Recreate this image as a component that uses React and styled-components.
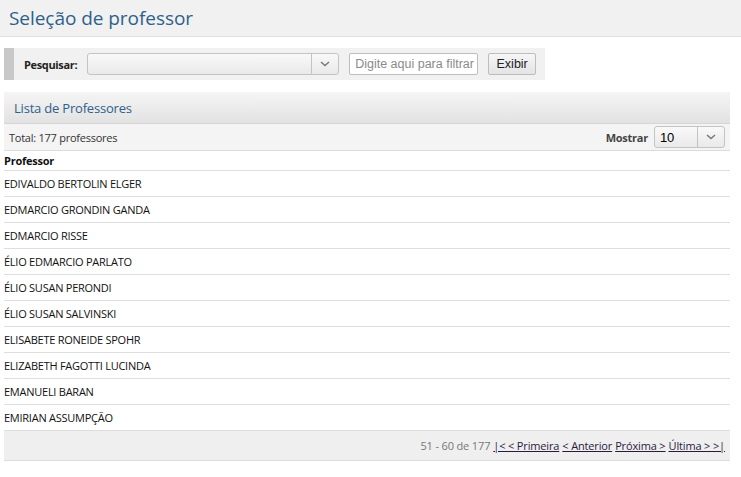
import React from "react";
import styled, { createGlobalStyle } from "styled-components";

const Global = createGlobalStyle`
  html, body { margin: 0; padding: 0; background: #fff; }
  body { font-family: "Open Sans", "Noto Sans", sans-serif; color: #000; }
`;

const Page = styled.div`
  width: 741px;
  min-height: 477px;
  display: flex;
  flex-direction: column;
`;

const TitleBar = styled.div`
  height: 36px;
  background: #f1f1f1;
  border-bottom: 1px solid #e0e0e0;
  display: flex;
  align-items: center;
  padding-left: 9px;
`;

const Title = styled.h1`
  margin: 0;
  font-family: "Open Sans", sans-serif;
  font-weight: 400;
  font-size: 19px;
  color: #2f5f8c;
  letter-spacing: -0.05px;
`;

const SearchBar = styled.div`
  margin: 11px 0 0 4px;
  align-self: flex-start;
  height: 32px;
  background: #f1f1f1;
  border-left: 10px solid #c8c8c8;
  display: flex;
  align-items: center;
  padding: 0 9px 0 10px;
`;

const Label = styled.span`
  font-size: 11px;
  font-weight: 700;
  letter-spacing: -0.35px;
  color: #222;
  margin-right: 10px;
`;

const SelectBox = styled.div`
  width: ${(p) => p.$w}px;
  border: 1px solid #c4c4c4;
  border-radius: 3px;
  background: linear-gradient(#f9f9f9, #e9e9e9);
  display: flex;
  box-sizing: border-box;
  height: 22px;
`;

const SelectValue = styled.div`
  flex: 1;
  font-family: "Liberation Sans", Arial, sans-serif;
  font-size: 13px;
  color: #000;
  display: flex;
  align-items: center;
  padding-left: 5px;
`;

const SelectArrow = styled.div`
  width: 26px;
  border-left: 1px solid #c4c4c4;
  display: flex;
  align-items: center;
  justify-content: center;
`;

const FilterInput = styled.div`
  margin-left: 10px;
  width: 129px;
  height: 22px;
  box-sizing: border-box;
  border: 1px solid #bdbdbd;
  border-radius: 2px;
  background: #fff;
  font-family: "Liberation Sans", Arial, sans-serif;
  font-size: 12.5px;
  color: #8a8a8a;
  display: flex;
  align-items: center;
  padding-left: 5px;
  white-space: nowrap;
  overflow: hidden;
`;

const Button = styled.div`
  margin-left: 10px;
  width: 48px;
  height: 22px;
  box-sizing: border-box;
  border: 1px solid #bdbdbd;
  border-radius: 2px;
  background: linear-gradient(#f6f6f6, #e4e4e4);
  font-family: "Liberation Sans", Arial, sans-serif;
  font-size: 12.5px;
  color: #222;
  display: flex;
  align-items: center;
  justify-content: center;
`;

const Panel = styled.div`
  margin: 12px 0 0 4px;
  width: 726px;
  display: flex;
  flex-direction: column;
`;

const PanelHeader = styled.div`
  height: 31px;
  background: linear-gradient(#f5f5f5, #e2e2e2);
  border-bottom: 1px solid #d6d6d6;
  display: flex;
  align-items: center;
  padding-left: 10px;
  font-size: 13px;
  letter-spacing: -0.2px;
  color: #2f5f8c;
`;

const Toolbar = styled.div`
  height: 26px;
  background: #f4f4f4;
  border-bottom: 1px solid #dcdcdc;
  display: flex;
  align-items: center;
  justify-content: space-between;
  padding: 0 5px;
  font-size: 11px;
  letter-spacing: -0.25px;
  color: #333;
`;

const Right = styled.div`
  display: flex;
  align-items: center;
`;

const Strong = styled.span`
  font-weight: 700;
  color: #444;
  margin-right: 6px;
`;

const Row = styled.div`
  height: ${(p) => p.$h}px;
  box-sizing: border-box;
  border-bottom: 1px solid #dedede;
  display: flex;
  align-items: center;
  font-size: 11px;
  letter-spacing: -0.25px;
  font-weight: ${(p) => (p.$head ? 700 : 400)};
  color: #111;
`;

const Footer = styled.div`
  height: 30px;
  box-sizing: border-box;
  background: #efefef;
  border-bottom: 1px solid #dcdcdc;
  display: flex;
  align-items: center;
  justify-content: flex-end;
  padding-right: 5px;
  font-size: 11px;
  letter-spacing: -0.15px;
  color: #777;
  gap: 3px;
`;

const PageLink = styled.a`
  color: #2b1a3c;
  text-decoration: underline;
  cursor: pointer;
`;

const Chevron = () => (
  <svg width="10" height="6" viewBox="0 0 10 6">
    <path d="M1 1 L5 4.5 L9 1" fill="none" stroke="#777" strokeWidth="1.4" />
  </svg>
);

const names = [
  "EDIVALDO BERTOLIN ELGER",
  "EDMARCIO GRONDIN GANDA",
  "EDMARCIO RISSE",
  "ÉLIO EDMARCIO PARLATO",
  "ÉLIO SUSAN PERONDI",
  "ÉLIO SUSAN SALVINSKI",
  "ELISABETE RONEIDE SPOHR",
  "ELIZABETH FAGOTTI LUCINDA",
  "EMANUELI BARAN",
  "EMIRIAN ASSUMPÇÃO",
];

export default function App() {
  return (
    <>
      <Global />
      <Page>
        <TitleBar>
          <Title>Seleção de professor</Title>
        </TitleBar>
        <SearchBar>
          <Label>Pesquisar:</Label>
          <SelectBox $w={252}>
            <SelectValue />
            <SelectArrow>
              <Chevron />
            </SelectArrow>
          </SelectBox>
          <FilterInput>Digite aqui para filtrar</FilterInput>
          <Button>Exibir</Button>
        </SearchBar>
        <Panel>
          <PanelHeader>Lista de Professores</PanelHeader>
          <Toolbar>
            <span>Total: 177 professores</span>
            <Right>
              <Strong>Mostrar</Strong>
              <SelectBox $w={71}>
                <SelectValue>10</SelectValue>
                <SelectArrow>
                  <Chevron />
                </SelectArrow>
              </SelectBox>
            </Right>
          </Toolbar>
          <Row $h={20} $head>Professor</Row>
          {names.map((n) => (
            <Row key={n} $h={26}>
              {n}
            </Row>
          ))}
          <Footer>
            <span>51 - 60 de 177</span>
            <PageLink>|&lt; &lt; Primeira</PageLink>
            <PageLink>&lt; Anterior</PageLink>
            <PageLink>Próxima &gt;</PageLink>
            <PageLink>Última &gt; &gt;|</PageLink>
          </Footer>
        </Panel>
      </Page>
    </>
  );
}
